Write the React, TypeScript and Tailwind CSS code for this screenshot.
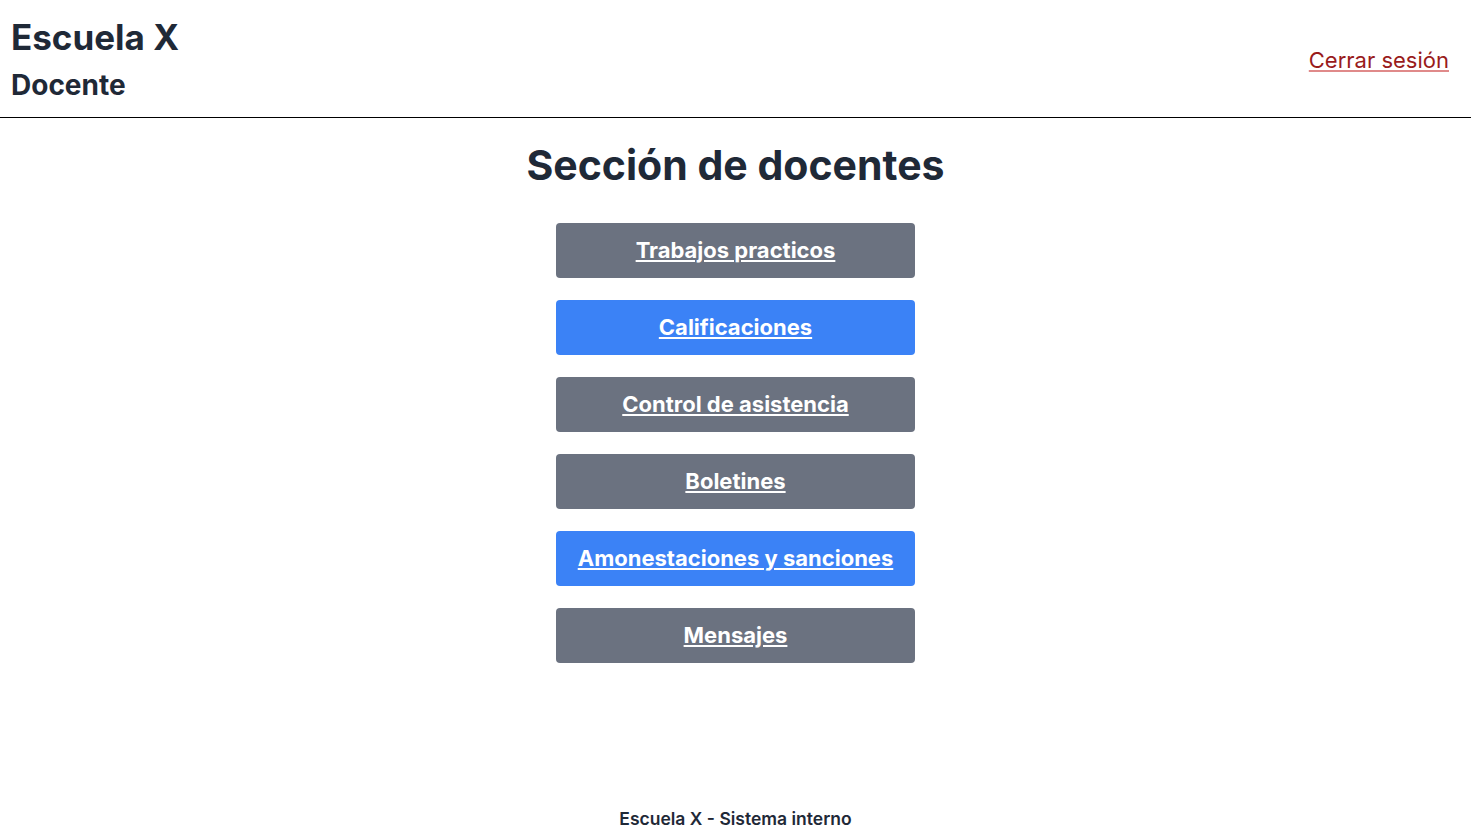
const links = [
  { label: "Trabajos practicos", color: "bg-[#6b7280]" },
  { label: "Calificaciones", color: "bg-[#3b82f6]" },
  { label: "Control de asistencia", color: "bg-[#6b7280]" },
  { label: "Boletines", color: "bg-[#6b7280]" },
  { label: "Amonestaciones y sanciones", color: "bg-[#3b82f6]" },
  { label: "Mensajes", color: "bg-[#6b7280]" },
];

export default function App() {
  return (
    <div
      className="min-h-screen flex flex-col bg-white text-[#1f2937]"
      style={{ fontFamily: "Inter, 'Noto Sans', sans-serif" }}
    >
      <header className="h-[118px] flex items-center justify-between pl-[11px] pr-[22px] border-b border-black">
        <div className="flex flex-col mt-[2px]">
          <h1 className="text-[35px] font-bold leading-tight">Escuela X</h1>
          <h2 className="text-[28px] font-bold leading-tight mt-[8px]">Docente</h2>
        </div>
        <a
          href="#"
          className="text-[22px] text-[#991b1b] underline decoration-[#e08a8a] mt-[3px]"
        >
          Cerrar sesión
        </a>
      </header>

      <main className="flex-1 flex flex-col items-center">
        <h3 className="text-[41px] font-bold mt-[22px] leading-tight">Sección de docentes</h3>
        <nav className="flex flex-col gap-[22px] mt-[32px]">
          {links.map((l) => (
            <a
              key={l.label}
              href="#"
              className={`${l.color} w-[359px] h-[55px] rounded flex items-center justify-center text-white text-[22px] font-bold underline`}
            >
              {l.label}
            </a>
          ))}
        </nav>
      </main>

      <footer className="h-[32px] flex items-start justify-center pt-[6px] text-[17.5px] font-semibold">
        Escuela X - Sistema interno
      </footer>
    </div>
  );
}
